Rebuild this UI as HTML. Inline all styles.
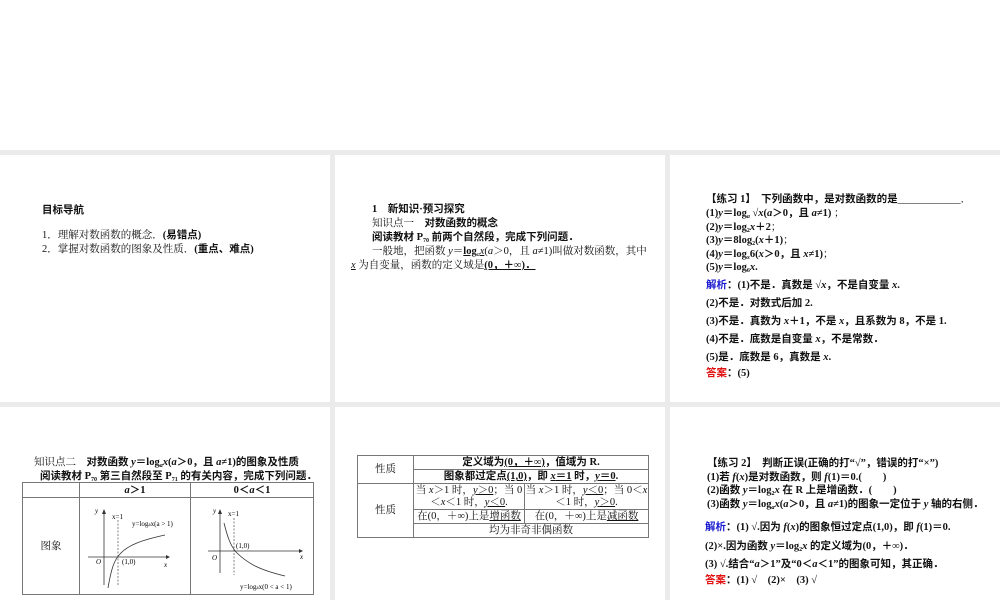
<!DOCTYPE html>
<html><head><meta charset="utf-8"><style>
body{margin:0;width:1000px;height:600px;background:#fff;position:relative;overflow:hidden;font-family:"Liberation Serif","Noto Serif CJK SC","Noto Sans CJK SC",serif;color:#111}
.g{position:absolute;background:#ebebeb}
.p{position:absolute;background:#fff}
.t{position:absolute;white-space:nowrap;font-size:10.5px;line-height:13px}
b{font-weight:bold;font-family:"Liberation Serif","Noto Sans CJK SC",sans-serif}
i{font-style:italic}
u{text-decoration:underline}
sub{font-size:6px;vertical-align:-2px;line-height:0}
table{position:absolute;border-collapse:collapse;font-size:10.5px}
td{border:1px solid #777;text-align:center;padding:0;line-height:13px}
.blue{color:#1a1ad0;font-weight:bold;font-family:"Liberation Serif","Noto Sans CJK SC",sans-serif}
.red{color:#e01010;font-weight:bold;font-family:"Liberation Serif","Noto Sans CJK SC",sans-serif}
</style></head><body>
<div class="g" style="left:0;top:150px;width:1000px;height:450px"></div>
<div class="p" style="left:0;top:155px;width:330px;height:247px"></div>
<div class="p" style="left:335px;top:155px;width:330px;height:247px"></div>
<div class="p" style="left:670px;top:155px;width:330px;height:247px"></div>
<div class="p" style="left:0;top:407px;width:330px;height:193px"></div>
<div class="p" style="left:335px;top:407px;width:330px;height:193px"></div>
<div class="p" style="left:670px;top:407px;width:330px;height:193px"></div>

<div class="t" style="left:42px;top:204px"><b>目标导航</b></div>
<div class="t" style="left:42px;top:229px">1．理解对数函数的概念．<b>(易错点)</b></div>
<div class="t" style="left:42px;top:243px">2．掌握对数函数的图象及性质．<b>(重点、难点)</b></div>

<div class="t" style="left:372px;top:203px"><b>1　新知识·预习探究</b></div>
<div class="t" style="left:372px;top:217px">知识点一　<b>对数函数的概念</b></div>
<div class="t" style="left:372px;top:231px"><b>阅读教材 P<sub>70</sub> 前两个自然段，完成下列问题．</b></div>
<div class="t" style="left:372px;top:245px">一般地，把函数 <i>y</i>＝<u><b>log</b><sub><i>a</i></sub><i>x</i></u>(<i>a</i>＞0，且 <i>a</i>≠1)叫做对数函数，其中</div>
<div class="t" style="left:351px;top:259px"><u><i>x</i></u> 为自变量，函数的定义域是<u><b>(0，＋∞)．</b></u></div>

<div class="t" style="left:706px;top:193px"><b>【练习 1】　下列函数中，是对数函数的是</b>____________．</div>
<div class="t" style="left:706px;top:207px"><b>(1)<i>y</i>＝log<sub><i>a</i></sub> √<i>x</i>(<i>a</i>＞0，且 <i>a</i>≠1)</b> ；</div>
<div class="t" style="left:706px;top:221px"><b>(2)<i>y</i>＝log<sub>2</sub><i>x</i>＋2</b>；</div>
<div class="t" style="left:706px;top:234px"><b>(3)<i>y</i>＝8log<sub>2</sub>(<i>x</i>＋1)</b>；</div>
<div class="t" style="left:706px;top:248px"><b>(4)<i>y</i>＝log<sub><i>x</i></sub>6(<i>x</i>＞0，且 <i>x</i>≠1)</b>；</div>
<div class="t" style="left:706px;top:261px"><b>(5)<i>y</i>＝log<sub>6</sub><i>x</i>.</b></div>
<div class="t" style="left:706px;top:279px"><span class="blue">解析</span><b>：(1)不是．真数是 √<i>x</i>，不是自变量 <i>x</i>.</b></div>
<div class="t" style="left:706px;top:297px"><b>(2)不是．对数式后加 2.</b></div>
<div class="t" style="left:706px;top:315px"><b>(3)不是．真数为 <i>x</i>＋1，不是 <i>x</i>，且系数为 8，不是 1.</b></div>
<div class="t" style="left:706px;top:333px"><b>(4)不是．底数是自变量 <i>x</i>，不是常数．</b></div>
<div class="t" style="left:706px;top:351px"><b>(5)是．底数是 6，真数是 <i>x</i>.</b></div>
<div class="t" style="left:706px;top:367px"><span class="red">答案</span><b>：(5)</b></div>

<div class="t" style="left:34px;top:456px">知识点二　<b>对数函数 <i>y</i>＝log<sub><i>a</i></sub><i>x</i>(<i>a</i>＞0，且 <i>a</i>≠1)的图象及性质</b></div>
<div class="t" style="left:40px;top:470px"><b>阅读教材 P<sub>70</sub> 第三自然段至 P<sub>71</sub> 的有关内容，完成下列问题．</b></div>
<table style="left:22px;top:482px;width:292px">
<tr style="height:15px"><td style="width:56px"></td><td style="width:110px"><b><i>a</i>＞1</b></td><td><b>0＜<i>a</i>＜1</b></td></tr>
<tr style="height:97px"><td>图象</td><td></td><td></td></tr>
</table>
<svg style="position:absolute;left:80px;top:500px" width="110" height="95" viewBox="0 0 110 95" font-family="Liberation Serif" font-size="7">
<line x1="8" y1="57" x2="88" y2="57" stroke="#333" stroke-width="0.8"/><path d="M86 55 L90 57 L86 59" fill="#333"/>
<line x1="24" y1="85" x2="24" y2="12" stroke="#333" stroke-width="0.8"/><path d="M22 14 L24 9 L26 14" fill="#333"/>
<line x1="38" y1="20" x2="38" y2="85" stroke="#333" stroke-width="0.6" stroke-dasharray="2,1.5"/>
<path d="M28 88 C31 70 34 60 40 54 C48 45 62 40 85 35" fill="none" stroke="#333" stroke-width="0.8"/>
<text x="15" y="13" font-style="italic">y</text><text x="32" y="19">x=1</text><text x="52" y="26">y=log<tspan font-size="5">a</tspan>x(a &gt; 1)</text>
<text x="16" y="64" font-style="italic">O</text><text x="42" y="64">(1,0)</text><text x="84" y="67" font-style="italic">x</text>
</svg>
<svg style="position:absolute;left:200px;top:500px" width="115" height="95" viewBox="0 0 115 95" font-family="Liberation Serif" font-size="7">
<line x1="8" y1="51" x2="102" y2="51" stroke="#333" stroke-width="0.8"/><path d="M99 49 L103 51 L99 53" fill="#333"/>
<line x1="20" y1="73" x2="20" y2="12" stroke="#333" stroke-width="0.8"/><path d="M18 14 L20 9 L22 14" fill="#333"/>
<line x1="34" y1="18" x2="34" y2="75" stroke="#333" stroke-width="0.6" stroke-dasharray="2,1.5"/>
<path d="M24 23 C27 35 30 45 36 52 C48 64 60 70 85 76" fill="none" stroke="#333" stroke-width="0.8"/>
<text x="13" y="13" font-style="italic">y</text><text x="28" y="16">x=1</text><text x="36" y="48">(1,0)</text>
<text x="12" y="60" font-style="italic">O</text><text x="100" y="59" font-style="italic">x</text><text x="40" y="89">y=log<tspan font-size="5">a</tspan>x(0 &lt; a &lt; 1)</text>
</svg>

<table style="left:357px;top:455px;width:292px">
<tr style="height:14px"><td rowspan="2" style="width:55px">性质</td><td colspan="2"><b>定义域为<u>(0，＋∞)</u>，值域为 R.</b></td></tr>
<tr style="height:14px"><td colspan="2"><b>图象都过定点<u>(1,0)</u>，即 <u><i>x</i>＝1</u> 时，<u><i>y</i>＝0</u>.</b></td></tr>
<tr style="height:26px"><td rowspan="3">性质</td><td style="width:110px;line-height:12px">当 <i>x</i>＞1 时，<u><i>y</i>＞0</u>；当 0<br>＜<i>x</i>＜1 时，<u><i>y</i>＜0</u>.</td><td style="line-height:12px">当 <i>x</i>＞1 时，<u><i>y</i>＜0</u>；当 0＜<i>x</i><br>＜1 时，<u><i>y</i>＞0</u>.</td></tr>
<tr style="height:14px"><td>在(0，＋∞)上是<u>增函数</u></td><td>在(0，＋∞)上是<u>减函数</u></td></tr>
<tr style="height:14px"><td colspan="2">均为非奇非偶函数</td></tr>
</table>

<div class="t" style="left:707px;top:457px"><b>【练习 2】　判断正误(正确的打“√”，错误的打“×”)</b></div>
<div class="t" style="left:707px;top:471px"><b>(1)若 <i>f</i>(<i>x</i>)是对数函数，则 <i>f</i>(1)＝0.(　　)</b></div>
<div class="t" style="left:707px;top:484px"><b>(2)函数 <i>y</i>＝log<sub>2</sub><i>x</i> 在 R 上是增函数．(　　)</b></div>
<div class="t" style="left:707px;top:498px"><b>(3)函数 <i>y</i>＝log<sub><i>a</i></sub><i>x</i>(<i>a</i>＞0，且 <i>a</i>≠1)的图象一定位于 <i>y</i> 轴的右侧．</b></div>
<div class="t" style="left:705px;top:521px"><span class="blue">解析</span><b>：(1) √.因为 <i>f</i>(<i>x</i>)的图象恒过定点(1,0)，即 <i>f</i>(1)＝0.</b></div>
<div class="t" style="left:705px;top:540px"><b>(2)×.因为函数 <i>y</i>＝log<sub>2</sub><i>x</i> 的定义域为(0，＋∞)．</b></div>
<div class="t" style="left:705px;top:558px"><b>(3) √.结合“<i>a</i>＞1”及“0＜<i>a</i>＜1”的图象可知，其正确．</b></div>
<div class="t" style="left:705px;top:574px"><span class="red">答案</span><b>：(1) √　(2)×　(3) √</b></div>
</body></html>
